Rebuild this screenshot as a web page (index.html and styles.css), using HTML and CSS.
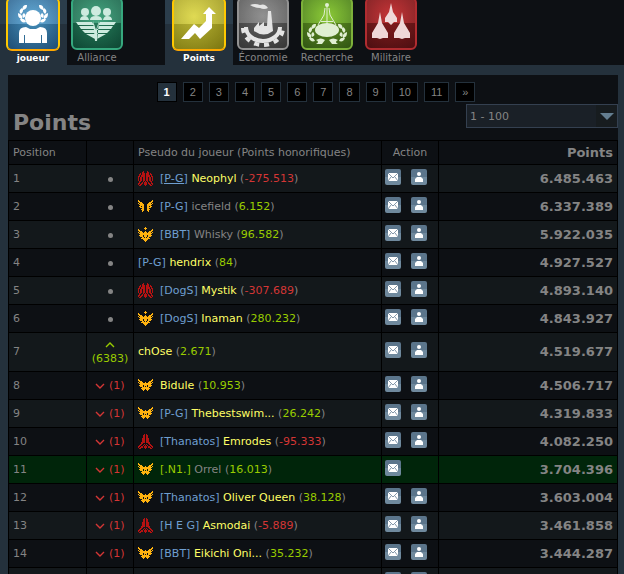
FILE: index.html
```
<!DOCTYPE html>
<html lang="fr">
<head>
    <meta charset="UTF-8">
    <meta name="viewport" content="width=device-width, initial-scale=1.0">
    <title>Points</title>
    <link rel="stylesheet" href="styles.css">
</head>
<body>
    <svg class="sprite" aria-hidden="true">
        <symbol id="mail" viewBox="0 0 16 16">
            <path fill="#fff" d="M3 4h10v8H3z"/>
            <path fill="none" stroke="#647e94" stroke-width="0.8" d="M3 4l5 5 5-5M3 12l3-4M13 12l-3-4"/>
        </symbol>
        <symbol id="person" viewBox="0 0 16 16">
            <circle cx="8" cy="5" r="2" fill="#fff"/>
            <path fill="#fff" d="M4 13v-3l2-2h4l2 2v3z"/>
        </symbol>
        <symbol id="down" viewBox="0 0 10 6">
            <path fill="none" stroke="#d43635" stroke-width="1.4" d="M1 1l4 4 4-4"/>
        </symbol>
        <symbol id="up" viewBox="0 0 10 6">
            <path fill="none" stroke="#99cc00" stroke-width="1.4" d="M1 5l4-4 4 4"/>
        </symbol>
        <symbol id="leaves" viewBox="0 0 10 18">
            <path d="M9 0C5 0 4 2 5 5 8 4 9 3 9 0zM4 3C1 5 1 7 3 9 5 7 6 5 4 3zM0 8c0 4 1 5 4 6C5 11 3 9 0 8zM6 8C4 9 4 11 5 13 8 12 8 10 6 8zM2 14c1 3 3 4 6 3C7 14 5 13 2 14z"/>
        </symbol>
    </svg>

    <nav class="tabs">
        <div class="tab-group">
            <a class="tab active" href="#">
                <span class="tile blue">
                    <svg viewBox="0 0 48 48">
                        <circle cx="24" cy="17" r="8"/>
                        <path d="M10 42V32q0-6 7-6l4 2h6l4-2q7 0 7 6v10h-5v-8h-1v8H16v-8h-1v8z"/>
                        <use href="#leaves" x="9" y="4" width="10" height="18"/>
                        <use href="#leaves" x="9" y="4" width="10" height="18" transform="matrix(-1 0 0 1 48 0)"/>
                    </svg>
                </span>
                <span class="tab-label">joueur</span>
            </a>
            <a class="tab" href="#">
                <span class="tile teal">
                    <svg viewBox="0 0 48 48">
                        <circle cx="23" cy="11" r="5"/>
                        <circle cx="12" cy="12" r="4"/>
                        <circle cx="34" cy="12" r="4"/>
                        <path d="M7 20q0-4 5-4 3 0 4 4zM39 20q0-4-5-4-3 0-4 4zM17 20q0-4 6-4t6 4z"/>
                        <path d="M3 22h16l2 3H5zM6 26h15l1 3H8zM9 30h13v3H12zM13 34h9v5zM43 22H27l-2 3h16zM40 26H25l-1 3h14zM37 30H24v3h10zM33 34h-9v5zM20 21l3 9 3-9-2 20h-2z"/>
                    </svg>
                </span>
                <span class="tab-label">Alliance</span>
            </a>
        </div>
        <div class="tab-group">
            <a class="tab active" href="#">
                <span class="tile yellow">
                    <svg viewBox="0 0 48 48">
                        <path d="M6 38l13-15 5 4 7-7v-7h-3l6-7 7 7h-4v14L25 38l-5-6-6 6z"/>
                    </svg>
                </span>
                <span class="tab-label">Points</span>
            </a>
            <a class="tab" href="#">
                <span class="tile grey">
                    <svg viewBox="0 0 48 48">
                        <path d="M11 5q5-2 10 0 5-2 8 3-4 2-8 0-6 0-10-3z"/>
                        <path d="M15 31v-3l5-6v4l5-4v4h3l1-15h3l2 20q-9 7-19 0z"/>
                        <path fill="none" stroke="#e4e4e4" stroke-width="4" d="M7 27a17 14 0 0 0 34 0"/>
                        <path fill="none" stroke="#e4e4e4" stroke-width="4" stroke-dasharray="5 5" d="M4 28a20 17 0 0 0 40 0"/>
                    </svg>
                </span>
                <span class="tab-label">Économie</span>
            </a>
            <a class="tab" href="#">
                <span class="tile green">
                    <svg viewBox="0 0 48 48">
                        <circle cx="24" cy="5" r="2"/>
                        <path fill="none" stroke="#e0efd2" d="M24 6v18M22 8l-1 7-6 10M26 8l1 7 6 10"/>
                        <path d="M18 21h12v1H18z"/>
                        <ellipse cx="24" cy="30" rx="12" ry="7"/>
                        <use href="#leaves" x="4" y="24" width="10" height="18"/>
                        <use href="#leaves" x="4" y="24" width="10" height="18" transform="matrix(-1 0 0 1 48 0)"/>
                        <path d="M13 40q5-3 9 0l-3 4h-6q4-2 0-4zM35 40q-5-3-9 0l3 4h6q-4-2 0-4z"/>
                    </svg>
                </span>
                <span class="tab-label">Recherche</span>
            </a>
            <a class="tab" href="#">
                <span class="tile red">
                    <svg viewBox="0 0 48 48">
                        <path d="M24 3l2 9 4 6v4h-3l-3 3-3-3h-3v-4l4-6z"/>
                        <path d="M13 12l2 11 6 10v5h-5l-3 1-3-1H5v-5l6-10zM35 12l2 11 6 10v5h-5l-3 1-3-1h-5v-5l6-10z"/>
                    </svg>
                </span>
                <span class="tab-label">Militaire</span>
            </a>
        </div>
    </nav>

    <main class="frame">
        <div class="content">
            <div class="pagination">
                <a class="current" href="#">1</a>
                <a href="#">2</a>
                <a href="#">3</a>
                <a href="#">4</a>
                <a href="#">5</a>
                <a href="#">6</a>
                <a href="#">7</a>
                <a href="#">8</a>
                <a href="#">9</a>
                <a href="#">10</a>
                <a href="#">11</a>
                <a href="#">»</a>
            </div>
            <div class="heading">
                <h1>Points</h1>
                <select class="range" aria-label="Position">
                    <option>1 - 100</option>
                </select>
            </div>

            <table class="ranks">
                <colgroup>
                    <col class="col-position">
                    <col class="col-change">
                    <col class="col-player">
                    <col class="col-action">
                    <col>
                </colgroup>
                <thead>
                    <tr>
                        <th>Position</th>
                        <th></th>
                        <th>Pseudo du joueur (Points honorifiques)</th>
                        <th class="center">Action</th>
                        <th class="score">Points</th>
                    </tr>
                </thead>
                <tbody id="rows"></tbody>
            </table>
        </div>
    </main>

    <script src="ranks.js"></script>
</body>
</html>
```

FILE: styles.css
```
html {
    overflow: hidden;
}

body {
    margin: 0;
    min-height: 100vh;
    background-color: #0d1014;
    color: #848484;
    font-family: Verdana, "DejaVu Sans", sans-serif;
    font-size: 11px;
}

a {
    color: inherit;
    text-decoration: none;
}

.sprite {
    position: absolute;
    width: 0;
    height: 0;
}

/* tabs */
.tabs {
    display: flex;
    gap: 38px;
    height: 65px;
    padding-left: 1px;
    overflow: hidden;
}

.tab-group {
    display: flex;
}

.tab {
    display: flex;
    flex-direction: column;
    align-items: center;
    width: 64px;
    font-size: 10px;
}

.tab.active {
    width: 68px;
    margin: 0 -2px;
    background: linear-gradient(#2b3d4b 24px, #24313c 24px);
    color: #fff;
    font-size: 9px;
    font-weight: bold;
}

.tile {
    box-sizing: border-box;
    display: flex;
    justify-content: center;
    align-items: flex-end;
    width: 52px;
    height: 53px;
    margin-top: -3px;
    margin-bottom: 2px;
    border: 2px solid;
    border-radius: 6px;
}

.tab.active .tile {
    width: 54px;
    height: 54px;
    margin-bottom: 1px;
    border-color: #ffee00 #ffc800 #ffa800;
}

.tile svg {
    flex: none;
    width: 48px;
    height: 48px;
    fill: #e4e4e4;
}

.tab.active svg {
    fill: #fff;
}

.tile.blue {
    background: linear-gradient(rgba(255, 255, 255, 0.12) 50%, rgba(0, 0, 0, 0.15) 50%), radial-gradient(circle at 50% 45%, #4fa5d8, #245a87);
}

.tile.teal {
    border-color: #36a87e;
    background: linear-gradient(rgba(255, 255, 255, 0.1) 50%, rgba(0, 0, 0, 0.2) 50%), radial-gradient(circle at 50% 40%, #2f9d72, #125840);
}

.tile.teal svg {
    fill: #cdebdf;
}

.tile.yellow {
    background: linear-gradient(rgba(255, 255, 255, 0.1) 50%, rgba(0, 0, 0, 0.15) 50%), radial-gradient(circle at 40% 35%, #dcd640, #908a12);
}

.tile.grey {
    border-color: #929292;
    background: linear-gradient(rgba(255, 255, 255, 0.1) 50%, rgba(0, 0, 0, 0.25) 50%), radial-gradient(circle at 50% 35%, #858585, #484848);
}

.tile.green {
    border-color: #7db03a;
    background: linear-gradient(rgba(255, 255, 255, 0.05) 50%, rgba(0, 0, 0, 0.25) 50%), radial-gradient(circle at 50% 35%, #86c82c, #40701a);
}

.tile.green svg {
    fill: #e0efd2;
}

.tile.red {
    border-color: #b02c30;
    background: linear-gradient(rgba(255, 255, 255, 0.05) 50%, rgba(0, 0, 0, 0.3) 50%), radial-gradient(circle at 50% 35%, #c42a2c, #6c1518);
}

.tile.red svg {
    fill: #efd8d8;
}

.tab-label {
    line-height: 12px;
}

/* content */
.frame {
    padding: 10px 6px 10px 8px;
    background-color: #24313c;
}

.content {
    padding-top: 7px;
    background-color: #0d1014;
}

.pagination {
    display: flex;
    justify-content: center;
    gap: 6px;
    padding-left: 6px;
    font-family: Arial, "Liberation Sans", sans-serif;
}

.pagination a {
    padding: 0 6px;
    border: 1px solid #24313c;
    background-color: #000;
    line-height: 18px;
}

.pagination .current {
    border-color: #000;
    background-color: #24313c;
    color: #fff;
    font-weight: bold;
}

.heading {
    display: flex;
    justify-content: space-between;
    align-items: flex-start;
}

h1 {
    margin: 8px 0 4px 5px;
    font-size: 22px;
    line-height: 26px;
}

.range {
    appearance: none;
    width: 152px;
    height: 24px;
    margin: 2px 0 0;
    padding: 0 3px;
    border: 1px solid #344050;
    border-radius: 0;
    background: url("data:image/svg+xml,%3Csvg xmlns='http://www.w3.org/2000/svg' width='21' height='22'%3E%3Cpath fill='%23171c1f' d='M0 0h21v22H0z'/%3E%3Cpath fill='%23647e90' d='M4 8h14l-7 7z'/%3E%3C/svg%3E") right center no-repeat #1a2027;
    color: #848484;
    font: inherit;
}

/* ranking */
.ranks {
    width: 100%;
    border-collapse: collapse;
    table-layout: fixed;
}

.col-position {
    width: 78px;
}

.col-change {
    width: 47px;
}

.col-player {
    width: 248px;
}

.col-action {
    width: 57px;
}

.ranks thead tr {
    height: 24px;
}

.ranks tbody tr {
    height: 28px;
}

.ranks tbody tr:nth-child(odd) {
    background-color: #13181b;
}

.ranks tbody tr.mine {
    background-color: #00250a;
}

.ranks th,
.ranks td {
    padding: 0 4px;
    border: 1px solid #000;
    font-weight: normal;
    line-height: 14px;
    text-align: left;
}

.ranks .center {
    text-align: center;
}

.ranks .score {
    font-size: 13px;
    font-weight: bold;
    text-align: right;
}

.ranks .change {
    padding: 5px 0;
    text-align: center;
}

.change svg {
    width: 10px;
    height: 6px;
}

.dot {
    display: inline-block;
    width: 5px;
    height: 5px;
    border-radius: 50%;
    background-color: #848484;
}

.player {
    display: flex;
    align-items: center;
    gap: 6px;
    white-space: nowrap;
}

.player svg {
    width: 16px;
    height: 16px;
    fill: #ffb20f;
    shape-rendering: crispEdges;
}

.player svg.bandit {
    fill: #b51212;
}

.tag {
    color: #6f9fd0;
}

.first .tag {
    text-decoration: underline;
}

.name {
    color: #ffff66;
}

.name.plain {
    color: #848484;
}

.good,
.mine .tag {
    color: #99cc00;
}

.bad {
    color: #d43635;
}

.ranks .action {
    padding: 0 3px 4px;
}

.buttons {
    display: flex;
    gap: 10px;
}

.buttons button {
    width: 16px;
    height: 16px;
    padding: 0;
    border: 0;
    border-radius: 2px;
    background: linear-gradient(#5b758b 50%, #6f899d 50%);
    cursor: pointer;
}

.buttons svg {
    display: block;
    width: 16px;
    height: 16px;
}
```

FILE: ranks.js
```
// left half of each rank icon plus the middle column, mirrored when drawn
const rankIcons = {
    'bandit': [
        '.....X..',
        '....XX..',
        '..X.XXX.',
        '.XX.XXX.',
        '.X.XXXX.',
        'XX.XXXX.',
        'X.XX.XX.',
        'X.XX.XX.',
        'X.XX.XX.',
        'X.XX.XX.',
        '.XX..X.X',
        '.X..X.XX',
        'XX.XX.XX',
        'X.XX..XX',
        '.XX....X'
    ],
    'bandit-low': [
        '......X.',
        '.....XX.',
        '.....XX.',
        '.....XX.',
        '....XXX.',
        '....XXX.',
        '....XXX.',
        '....XXX.',
        '...XXXX.',
        '...XX...',
        '..XX..X.',
        '.XX..X.X',
        'XX.XX.XX',
        'X.XXX.XX',
        '.XX....X'
    ],
    'wings': [
        '........',
        'X.......',
        'XX......',
        '.XXX....',
        'X.XXX...',
        '.XXXXX..',
        '..XXXX..',
        '.XX.XX..',
        '..XXXX..',
        '....XX..',
        '...XXX..',
        '....XX..',
        '....X...'
    ],
    'star': [
        '.......X',
        '......XX',
        'X......X',
        'XX......',
        '.XXX...X',
        'X.XXX.XX',
        '.XXXXXXX',
        '..XXXXXX',
        '.XXXX.XX',
        '..XXX.XX',
        '....XX.X',
        '...XXXXX',
        '.....XXX',
        '......XX',
        '.......X'
    ],
    'lord': [
        '........',
        'X.......',
        'XX......',
        '.XXX....',
        'X.XXX..X',
        '.XXXXXXX',
        '..XXXXXX',
        '.XXXX.XX',
        '..XXX.X.',
        '....XXXX',
        '...XXXXX',
        '....XXX.',
        '.....X..'
    ]
};

// position, change, rank icon, alliance, name, greyed name, honour, points
const players = [
    ['1', 0, 'bandit', '[P-G]', 'Neophyl', false, '-275.513', '6.485.463'],
    ['2', 0, 'wings', '[P-G]', 'icefield', true, '6.152', '6.337.389'],
    ['3', 0, 'star', '[BBT]', 'Whisky', true, '96.582', '5.922.035'],
    ['4', 0, '', '[P-G]', 'hendrix', false, '84', '4.927.527'],
    ['5', 0, 'bandit', '[DogS]', 'Mystik', false, '-307.689', '4.893.140'],
    ['6', 0, 'star', '[DogS]', 'Inaman', false, '280.232', '4.843.927'],
    ['7', 6383, '', '', 'chOse', false, '2.671', '4.519.677'],
    ['8', -1, 'lord', '', 'Bidule', false, '10.953', '4.506.717'],
    ['9', -1, 'lord', '[P-G]', 'Thebestswim...', false, '26.242', '4.319.833'],
    ['10', -1, 'bandit-low', '[Thanatos]', 'Emrodes', false, '-95.333', '4.082.250'],
    ['11', -1, 'lord', '[.N1.]', 'Orrel', true, '16.013', '3.704.396'],
    ['12', -1, 'lord', '[Thanatos]', 'Oliver Queen', false, '38.128', '3.603.004'],
    ['13', -1, 'bandit-low', '[H E G]', 'Asmodai', false, '-5.889', '3.461.858'],
    ['14', -1, 'lord', '[BBT]', 'Eikichi Oni...', false, '35.232', '3.444.287']
];

const mailButton = '<button type="button" aria-label="Message"><svg><use href="#mail"/></svg></button>';
const friendButton = '<button type="button" aria-label="Ami"><svg><use href="#person"/></svg></button>';

function rankIcon(rank) {
    if (!rank) {
        return '';
    }
    let d = '';
    rankIcons[rank].forEach((row, y) => {
        [...row].forEach((pixel, x) => {
            if (pixel === 'X') {
                d += `M${x} ${y}h1v1h-1zM${14 - x} ${y}h1v1h-1z`;
            }
        });
    });
    return `<svg viewBox="0 0 16 16" class="${rank.startsWith('bandit') ? 'bandit' : ''}"><path d="${d}"/></svg>`;
}

function changeCell(change) {
    if (change > 0) {
        return `<span class="good"><svg><use href="#up"/></svg><br>(${change})</span>`;
    }
    if (change < 0) {
        return `<span class="bad"><svg><use href="#down"/></svg> (${-change})</span>`;
    }
    return '<span class="dot"></span>';
}

const rows = players.map(([position, change, rank, tag, name, plain, honour, points]) => {
    const mine = position === '11';
    const tagLink = tag ? `<a class="tag" href="#">${tag}</a> ` : '';

    return `<tr class="${mine ? 'mine' : ''} ${position === '1' ? 'first' : ''}">
        <td>${position}</td>
        <td class="change">${changeCell(change)}</td>
        <td><div class="player">${rankIcon(rank)}<span>${tagLink}<span class="name ${plain ? 'plain' : ''}">${name}</span> (<span class="${honour[0] === '-' ? 'bad' : 'good'}">${honour}</span>)</span></div></td>
        <td class="action"><div class="buttons">${mailButton}${mine ? '' : friendButton}</div></td>
        <td class="score">${points}</td>
    </tr>`;
});

// next row, still without its player
rows.push(`<tr><td></td><td></td><td></td><td class="action"><div class="buttons">${mailButton}${friendButton}</div></td><td></td></tr>`);

document.getElementById('rows').innerHTML = rows.join('');
```
